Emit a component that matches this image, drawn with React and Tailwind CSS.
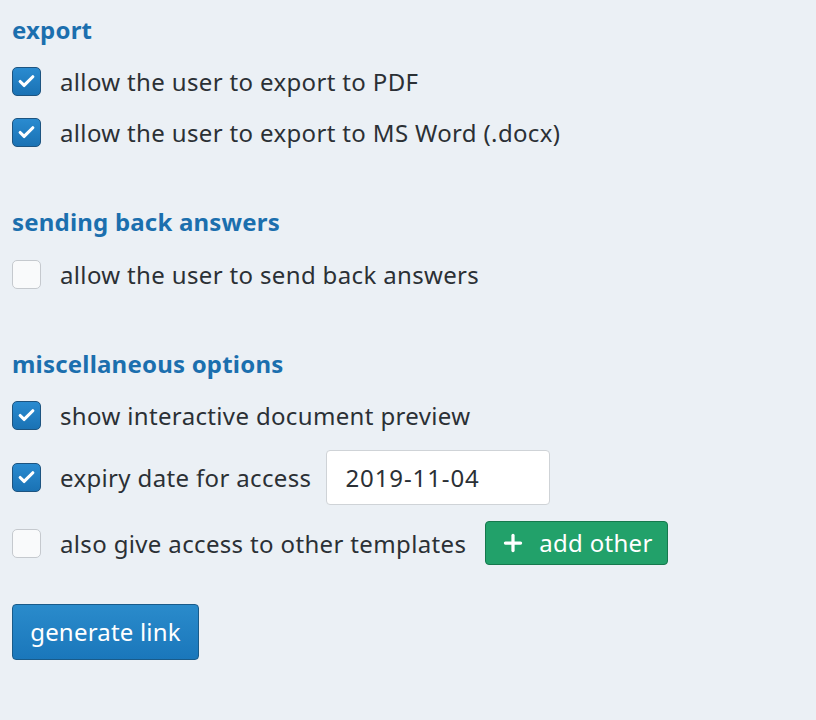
import { Check, Plus } from "lucide-react";

function Box({ checked }) {
  if (checked) {
    return (
      <span className="flex h-[29px] w-[29px] shrink-0 items-center justify-center rounded-[5px] border border-[#1d5480] bg-gradient-to-b from-[#2a8bd0] to-[#1a72b4]">
        <Check className="text-white" size={19} strokeWidth={4} />
      </span>
    );
  }
  return <span className="h-[29px] w-[29px] shrink-0 rounded-[5px] border border-[#c5c9ce] bg-[#f9fafb]" />;
}

function Row({ checked, label, children }) {
  return (
    <div className="flex items-center gap-[19px]">
      <Box checked={checked} />
      <span className="whitespace-nowrap text-[24px] leading-[29px] tracking-[0.35px] text-[#2b3035]">{label}</span>
      {children}
    </div>
  );
}

function Heading({ children }) {
  return <h2 className="text-[24px] font-bold leading-[32px] tracking-[0.2px] text-[#1b6fae]">{children}</h2>;
}

export default function App() {
  return (
    <div className="min-h-[720px] w-full bg-[#ebf0f5] px-3 pt-[14px]" style={{ fontFamily: '"Noto Sans", sans-serif' }}>
      <Heading>export</Heading>
      <div className="mt-[21px] flex flex-col gap-[22px]">
        <Row checked label="allow the user to export to PDF" />
        <Row checked label="allow the user to export to MS Word (.docx)" />
      </div>

      <div className="mt-[59px]">
        <Heading>sending back answers</Heading>
      </div>
      <div className="mt-[22px]">
        <Row label="allow the user to send back answers" />
      </div>

      <div className="mt-[59px]">
        <Heading>miscellaneous options</Heading>
      </div>
      <div className="mt-[21px] flex flex-col">
        <Row checked label="show interactive document preview" />
        <div className="mt-[20px]">
          <Row checked label="expiry date for access">
            <div className="-ml-[4px] flex h-[55px] w-[224px] shrink-0 items-center rounded-[4px] border border-[#cfd3d7] bg-white px-[18px] text-[24px] tracking-[0.9px] text-[#2b3035]">
              2019-11-04
            </div>
          </Row>
        </div>
        <div className="mt-[16px]">
          <Row label="also give access to other templates">
            <button className="flex h-[44px] w-[183px] shrink-0 items-center gap-[13px] whitespace-nowrap rounded-[4px] border border-[#16794d] bg-[#22a16a] px-[14px] text-[24px] tracking-[0.3px] text-white">
              <Plus size={26} strokeWidth={3} />
              add other
            </button>
          </Row>
        </div>
      </div>

      <button className="mt-[39px] flex h-[56px] w-[187px] items-center justify-center rounded-[4px] border border-[#195b8a] bg-gradient-to-b from-[#2a8bcb] to-[#1a77bb] text-[24px] tracking-[0.2px] text-white">
        generate link
      </button>
    </div>
  );
}
